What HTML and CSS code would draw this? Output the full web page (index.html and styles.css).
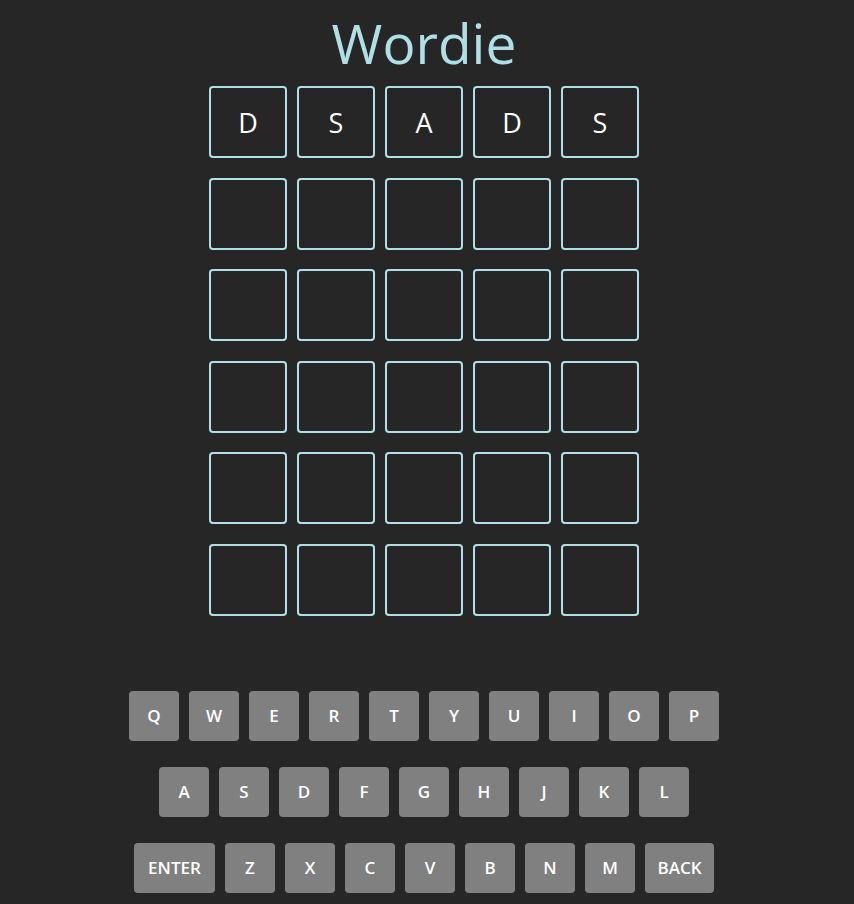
FILE: index.html
```html
<!DOCTYPE html>
<html>
<head>
<meta charset="utf-8">
<title>Wordie</title>
<link rel="stylesheet" href="styles.css">
</head>
<body>
<div class="app">
  <h1 class="title">Wordie</h1>
  <div class="board">
    <div class="tile">D</div><div class="tile">S</div><div class="tile">A</div><div class="tile">D</div><div class="tile">S</div>
    <div class="tile"></div><div class="tile"></div><div class="tile"></div><div class="tile"></div><div class="tile"></div>
    <div class="tile"></div><div class="tile"></div><div class="tile"></div><div class="tile"></div><div class="tile"></div>
    <div class="tile"></div><div class="tile"></div><div class="tile"></div><div class="tile"></div><div class="tile"></div>
    <div class="tile"></div><div class="tile"></div><div class="tile"></div><div class="tile"></div><div class="tile"></div>
    <div class="tile"></div><div class="tile"></div><div class="tile"></div><div class="tile"></div><div class="tile"></div>
  </div>
  <div class="keyboard">
    <div class="krow">
      <button class="key">Q</button><button class="key">W</button><button class="key">E</button><button class="key">R</button><button class="key">T</button><button class="key">Y</button><button class="key">U</button><button class="key">I</button><button class="key">O</button><button class="key">P</button>
    </div>
    <div class="krow">
      <button class="key">A</button><button class="key">S</button><button class="key">D</button><button class="key">F</button><button class="key">G</button><button class="key">H</button><button class="key">J</button><button class="key">K</button><button class="key">L</button>
    </div>
    <div class="krow">
      <button class="key key-enter">ENTER</button><button class="key">Z</button><button class="key">X</button><button class="key">C</button><button class="key">V</button><button class="key">B</button><button class="key">N</button><button class="key">M</button><button class="key key-back">BACK</button>
    </div>
  </div>
</div>
</body>
</html>
```
FILE: styles.css
```css
html, body {
  margin: 0;
  padding: 0;
  background: #262626;
}
body {
  font-family: "Open Sans", "DejaVu Sans", sans-serif;
  color: #ffffff;
}
.app {
  width: 848px;
  display: flex;
  flex-direction: column;
  align-items: center;
}
.title {
  margin: 15px 0 0 0;
  font-size: 55px;
  line-height: 1;
  font-weight: 500;
  color: #b0e0e6;
}
.board {
  margin-top: 16px;
  display: grid;
  grid-template-columns: repeat(5, 78px);
  grid-auto-rows: 72px;
  column-gap: 10px;
  row-gap: 19.6px;
}
.tile {
  box-sizing: border-box;
  border: 2px solid #b0e0e6;
  border-radius: 4px;
  display: flex;
  align-items: center;
  justify-content: center;
  font-size: 27px;
  font-weight: 500;
  color: #ffffff;
}
.keyboard {
  margin-top: 75px;
  display: flex;
  flex-direction: column;
  align-items: center;
  gap: 26px;
}
.krow {
  display: flex;
  gap: 10px;
}
.key {
  box-sizing: border-box;
  width: 50px;
  height: 50px;
  padding: 0;
  border: none;
  border-radius: 4px;
  background: #808080;
  color: #ffffff;
  font-family: "Open Sans", "DejaVu Sans", sans-serif;
  font-size: 17px;
  font-weight: 600;
  display: flex;
  align-items: center;
  justify-content: center;
}
.key-enter {
  width: 81px;
}
.key-back {
  width: 69px;
}
```
